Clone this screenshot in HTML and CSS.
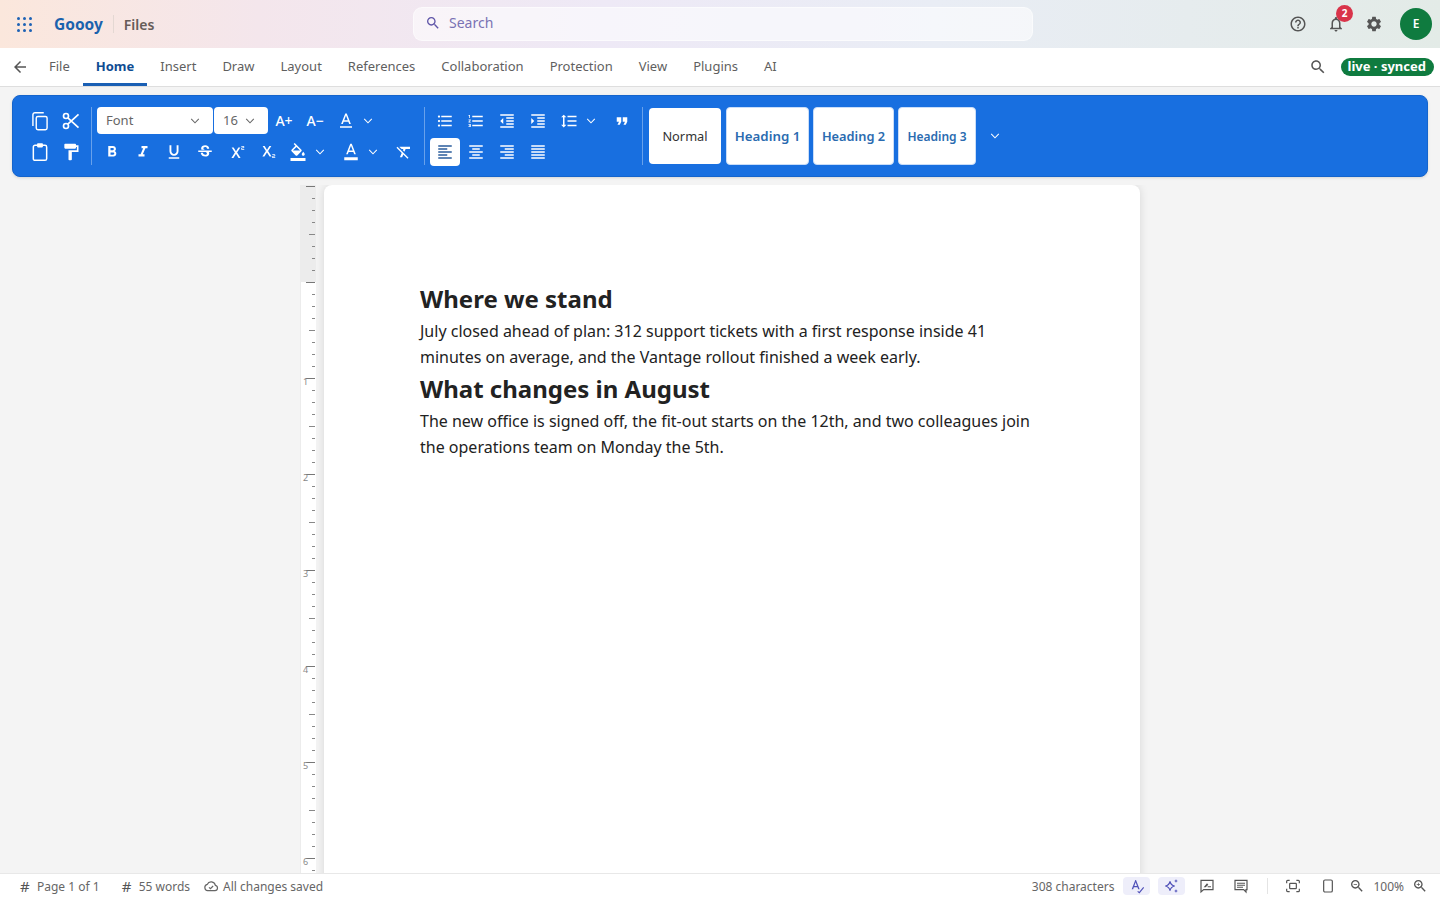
FILE: index.html
```html
<!DOCTYPE html>
<html lang="en">
<head>
  <meta charset="UTF-8" />
  <meta name="viewport" content="width=device-width, initial-scale=1.0"/>
  <title>Goooy Files</title>
  <link rel="stylesheet" href="styles.css">
</head>
<body>

  <!-- icon sprite -->
  <svg class="sprite" xmlns="http://www.w3.org/2000/svg">
    <symbol id="i-back" viewBox="0 0 24 24"><path d="M20 11H7.83l5.59-5.59L12 4l-8 8 8 8 1.41-1.41L7.83 13H20v-2z"/></symbol>
    <symbol id="i-search" viewBox="0 0 24 24"><path d="M15.5 14h-.79l-.28-.27C15.41 12.59 16 11.11 16 9.5 16 5.91 13.09 3 9.5 3S3 5.91 3 9.5 5.91 16 9.5 16c1.61 0 3.09-.59 4.23-1.57l.27.28v.79l5 4.99L20.49 19l-4.99-5zm-6 0C7.01 14 5 11.99 5 9.5S7.01 5 9.5 5 14 7.01 14 9.5 11.99 14 9.5 14z"/></symbol>
    <symbol id="i-bell" viewBox="0 0 24 24"><path d="M12 22c1.1 0 2-.9 2-2h-4c0 1.1.9 2 2 2zm6-6v-5c0-3.07-1.63-5.64-4.5-6.32V4c0-.83-.67-1.5-1.5-1.5s-1.5.67-1.5 1.5v.68C7.64 5.36 6 7.92 6 11v5l-2 2v1h16v-1l-2-2zm-2 1H8v-6c0-2.48 1.51-4.5 4-4.5s4 2.02 4 4.5v6z"/></symbol>
    <symbol id="i-gear" viewBox="0 0 24 24"><path d="M19.14 12.94c.04-.3.06-.61.06-.94 0-.32-.02-.64-.07-.94l2.03-1.58c.18-.14.23-.41.12-.61l-1.92-3.32c-.12-.22-.37-.29-.59-.22l-2.39.96c-.5-.38-1.03-.7-1.62-.94l-.36-2.54c-.04-.24-.24-.41-.48-.41h-3.84c-.24 0-.43.17-.47.41l-.36 2.54c-.59.24-1.13.57-1.62.94l-2.39-.96c-.22-.08-.47 0-.59.22L2.74 8.87c-.12.21-.08.47.12.61l2.03 1.58c-.05.3-.09.63-.09.94s.02.64.07.94l-2.03 1.58c-.18.14-.23.41-.12.61l1.92 3.32c.12.22.37.29.59.22l2.39-.96c.5.38 1.03.7 1.62.94l.36 2.54c.05.24.24.41.48.41h3.84c.24 0 .44-.17.47-.41l.36-2.54c.59-.24 1.13-.56 1.62-.94l2.39.96c.22.08.47 0 .59-.22l1.92-3.32c.12-.22.07-.47-.12-.61l-2.01-1.58zM12 15.6c-1.98 0-3.6-1.62-3.6-3.6s1.62-3.6 3.6-3.6 3.6 1.62 3.6 3.6-1.62 3.6-3.6 3.6z"/></symbol>
    <symbol id="i-help" viewBox="0 0 24 24"><path d="M11 18h2v-2h-2v2zm1-16C6.48 2 2 6.48 2 12s4.48 10 10 10 10-4.48 10-10S17.52 2 12 2zm0 18c-4.41 0-8-3.59-8-8s3.59-8 8-8 8 3.59 8 8-3.59 8-8 8zm0-14c-2.21 0-4 1.79-4 4h2c0-1.1.9-2 2-2s2 .9 2 2c0 2-3 1.75-3 5h2c0-2.25 3-2.5 3-5 0-2.21-1.79-4-4-4z"/></symbol>
    <symbol id="i-chev" viewBox="0 0 24 24"><path d="M5.5 8.5 12 15l6.5-6.5" fill="none" stroke="currentColor" stroke-width="1.8"/></symbol>
    <symbol id="i-copy" viewBox="0 0 24 24"><g fill="none" stroke="currentColor" stroke-width="1.7"><rect x="7.5" y="6.5" width="13" height="16" rx="2"/><path d="M16.5 2H6a2.5 2.5 0 0 0-2.5 2.5V18"/></g></symbol>
    <symbol id="i-cut" viewBox="0 0 24 24"><g fill="none" stroke="currentColor" stroke-width="2"><circle cx="6" cy="6" r="3"/><circle cx="6" cy="18" r="3"/><path d="M8.2 8.2 21 20M21 4 8.2 15.8"/></g></symbol>
    <symbol id="i-paste" viewBox="0 0 24 24"><g fill="none" stroke="currentColor" stroke-width="1.8"><rect x="4" y="4" width="16" height="18" rx="2"/></g><rect x="8.500" y="1.500" width="7" height="5" rx="1" fill="currentColor"/></symbol>
    <symbol id="i-paint" viewBox="0 0 24 24"><path d="M18 4V3c0-.55-.45-1-1-1H5c-.55 0-1 .45-1 1v4c0 .55.45 1 1 1h12c.55 0 1-.45 1-1V6h1v4H9v11c0 .55.45 1 1 1h2c.55 0 1-.45 1-1v-9h8V4h-3z"/></symbol>
    <symbol id="i-bold" viewBox="0 0 24 24"><path d="M15.6 10.79c.97-.67 1.65-1.77 1.65-2.79 0-2.26-1.75-4-4-4H7v14h7.04c2.09 0 3.71-1.7 3.71-3.79 0-1.52-.86-2.82-2.15-3.42zM10 6.5h3c.83 0 1.5.67 1.5 1.5s-.67 1.5-1.5 1.5h-3v-3zm3.5 9H10v-3h3.5c.83 0 1.5.67 1.5 1.5s-.67 1.5-1.5 1.5z"/></symbol>
    <symbol id="i-italic" viewBox="0 0 24 24"><path d="M10 4v3h2.21l-3.42 8H6v3h8v-3h-2.21l3.42-8H18V4z"/></symbol>
    <symbol id="i-under" viewBox="0 0 24 24"><path d="M12 17c3.31 0 6-2.69 6-6V3h-2.5v8c0 1.93-1.57 3.5-3.5 3.5S8.5 12.93 8.5 11V3H6v8c0 3.31 2.69 6 6 6zm-7 2v2h14v-2H5z"/></symbol>
    <symbol id="i-strike" viewBox="0 0 24 24"><path d="M6.85 7.08C6.85 4.37 9.45 3 12.24 3c1.64 0 3 .49 3.9 1.28.77.65 1.46 1.73 1.46 3.24h-3.01c0-.31-.05-.59-.15-.85-.29-.86-1.2-1.28-2.25-1.28-1.86 0-2.34 1.02-2.34 1.7 0 .48.25.88.74 1.21.38.25.77.48 1.41.7H7.39c-.21-.34-.54-.89-.54-1.92zM21 12v-2H3v2h9.62c1.15.45 1.96.75 1.96 1.97 0 1-.81 1.67-2.28 1.67-1.54 0-2.93-.54-2.93-2.51H6.4c0 .55.08 1.13.24 1.58.81 2.29 3.29 3.3 5.67 3.3 2.27 0 5.3-.89 5.3-4.05 0-.3-.01-1.16-.48-1.94H21V12z"/></symbol>
    <symbol id="i-sup" viewBox="0 0 24 24"><path d="M22 7h-2v1h3v1h-4V7c0-.55.45-1 1-1h2V5h-3V4h3c.55 0 1 .45 1 1v1c0 .55-.45 1-1 1zM5.88 20h2.66l3.4-5.42h.12l3.4 5.42h2.66l-4.65-7.27L17.81 6h-2.68l-3.07 4.99h-.12L8.85 6H6.19l4.32 6.73L5.88 20z"/></symbol>
    <symbol id="i-sub" viewBox="0 0 24 24"><path d="M22 18h-2v1h3v1h-4v-2c0-.55.45-1 1-1h2v-1h-3v-1h3c.55 0 1 .45 1 1v1c0 .55-.45 1-1 1zM5.88 18h2.66l3.4-5.42h.12l3.4 5.42h2.66l-4.65-7.27L17.81 4h-2.68l-3.07 4.99h-.12L8.85 4H6.19l4.32 6.73L5.88 18z"/></symbol>
    <symbol id="i-fill" viewBox="0 0 24 24"><path d="M16.56 8.94 7.62 0 6.21 1.41l2.38 2.38-5.15 5.15c-.59.59-.59 1.54 0 2.12l5.5 5.5c.29.29.68.44 1.06.44s.77-.15 1.06-.44l5.5-5.5c.59-.58.59-1.53 0-2.12zM5.21 10 10 5.21 14.79 10H5.21zM19 11.5s-2 2.17-2 3.5c0 1.1.9 2 2 2s2-.9 2-2c0-1.33-2-3.5-2-3.5z"/><rect x="2" y="20" width="20" height="4"/></symbol>
    <symbol id="i-color" viewBox="0 0 24 24"><path d="M11 1 5.5 15h2.25l1.12-3h6.25l1.12 3h2.25L13 1h-2zm-1.38 9L12 3.67 14.38 10H9.62z"/><rect x="3" y="19" width="18" height="4"/></symbol>
    <symbol id="i-color-thin" viewBox="0 0 24 24"><path d="M11 2 5.5 16h2.25l1.12-3h6.25l1.12 3h2.25L13 2h-2zm-1.38 9L12 4.67 14.38 11H9.62z"/><rect x="4" y="19" width="16" height="2"/></symbol>
    <symbol id="i-clear" viewBox="0 0 24 24"><path d="M3.27 5 2 6.27l6.97 6.97L6.5 19h3l1.57-3.66L16.73 21 18 19.73 3.55 5.27 3.27 5zM6 5v.18L8.82 8h2.4l-.72 1.68 2.1 2.1L14.21 8H20V5H6z"/></symbol>
    <symbol id="i-bullets" viewBox="0 0 24 24"><path d="M4 10.5c-.83 0-1.5.67-1.5 1.5s.67 1.5 1.5 1.5 1.5-.67 1.5-1.5-.67-1.5-1.5-1.5zm0-6c-.83 0-1.5.67-1.5 1.5S3.17 7.5 4 7.5 5.5 6.83 5.5 6 4.83 4.5 4 4.5zm0 12c-.83 0-1.5.68-1.5 1.5s.68 1.5 1.5 1.5 1.5-.68 1.5-1.5-.67-1.5-1.5-1.5zM7 19h14v-2H7v2zm0-6h14v-2H7v2zm0-8v2h14V5H7z"/></symbol>
    <symbol id="i-numbers" viewBox="0 0 24 24"><path d="M2 17h2v.5H3v1h1v.5H2v1h3v-4H2v1zm1-9h1V4H2v1h1v3zm-1 3h1.8L2 13.1v.9h3v-1H3.2L5 10.9V10H2v1zm5-6v2h14V5H7zm0 14h14v-2H7v2zm0-6h14v-2H7v2z"/></symbol>
    <symbol id="i-outdent" viewBox="0 0 24 24"><path d="M11 17h10v-2H11v2zm-8-5 4 4V8l-4 4zm0 9h18v-2H3v2zM3 3v2h18V3H3zm8 6h10V7H11v2zm0 4h10v-2H11v2z"/></symbol>
    <symbol id="i-indent" viewBox="0 0 24 24"><path d="M3 21h18v-2H3v2zM3 8v8l4-4-4-4zm8 9h10v-2H11v2zM3 3v2h18V3H3zm8 6h10V7H11v2zm0 4h10v-2H11v2z"/></symbol>
    <symbol id="i-spacing" viewBox="0 0 24 24"><path d="M6 7h2.5L5 3.5 1.5 7H4v10H1.5L5 20.5 8.5 17H6V7zm4-2v2h12V5H10zm0 14h12v-2H10v2zm0-6h12v-2H10v2z"/></symbol>
    <symbol id="i-quote" viewBox="0 0 24 24"><path d="M6 17h3l2-4V7H5v6h3zm8 0h3l2-4V7h-6v6h3z"/></symbol>
    <symbol id="i-left" viewBox="0 0 24 24"><path d="M15 15H3v2h12v-2zm0-8H3v2h12V7zM3 13h18v-2H3v2zm0 8h18v-2H3v2zM3 3v2h18V3H3z"/></symbol>
    <symbol id="i-center" viewBox="0 0 24 24"><path d="M7 15v2h10v-2H7zm-4 6h18v-2H3v2zm0-8h18v-2H3v2zm4-6v2h10V7H7zM3 3v2h18V3H3z"/></symbol>
    <symbol id="i-right" viewBox="0 0 24 24"><path d="M3 21h18v-2H3v2zm6-4h12v-2H9v2zm-6-4h18v-2H3v2zm6-4h12V7H9v2zM3 3v2h18V3H3z"/></symbol>
    <symbol id="i-justify" viewBox="0 0 24 24"><path d="M3 21h18v-2H3v2zm0-4h18v-2H3v2zm0-4h18v-2H3v2zm0-4h18V7H3v2zm0-6v2h18V3H3z"/></symbol>
    <symbol id="i-cloud" viewBox="0 0 24 24"><g fill="none" stroke="currentColor" stroke-width="1.8"><path d="M7 19h11a4 4 0 0 0 .6-7.9A6.5 6.5 0 0 0 6.3 9.6 4.8 4.8 0 0 0 7 19z"/><path d="m9 14 2.2 2 4-4"/></g></symbol>
    <symbol id="i-spell" viewBox="0 0 24 24"><path d="M9.5 3 4 17h2.2l1.1-3h5.4l1.1 3H16L10.500 3h-1zM8 12l2-5.500L12 12H8z"/><path d="m13 20 2.500 2L22 14" fill="none" stroke="currentColor" stroke-width="1.700"/></symbol>
    <symbol id="i-spark" viewBox="0 0 24 24"><path d="M9 5c.9 4.600 2.400 6.100 7 7-4.600.9-6.100 2.400-7 7-.9-4.600-2.400-6.100-7-7 4.600-.9 6.100-2.400 7-7z" fill="none" stroke="currentColor" stroke-width="1.800"/><path d="M18 1.500c.4 2 1.100 2.700 3 3-1.900.3-2.600 1-3 3-.4-2-1.100-2.700-3-3 1.900-.3 2.600-1 3-3zM18 16.500c.4 2 1.100 2.700 3 3-1.900.3-2.600 1-3 3-.4-2-1.100-2.700-3-3 1.900-.3 2.600-1 3-3z"/></symbol>
    <symbol id="i-sign" viewBox="0 0 24 24"><g fill="none" stroke="currentColor" stroke-width="1.800"><path d="M3 3.500h18v14H7l-4 3.500z"/></g><path d="m7 14 5-6 2 2-4 4zM13 14h5v-1.500h-5z"/></symbol>
    <symbol id="i-comment" viewBox="0 0 24 24"><g fill="none" stroke="currentColor" stroke-width="1.800"><path d="M3 3.500h18v14h-1.500V21L16 17.500H3z"/></g><path d="M6 7h12v1.600H6zM6 10h12v1.600H6zM6 13h9v1.600H6z"/></symbol>
    <symbol id="i-fit" viewBox="0 0 24 24"><g fill="none" stroke="currentColor" stroke-width="1.800"><rect x="7" y="8" width="10" height="8" rx="1"/><path d="M2.500 8V5a1.500 1.500 0 0 1 1.500-1.500h3M17 3.500h3A1.500 1.500 0 0 1 21.500 5v3M21.500 16v3a1.500 1.500 0 0 1-1.500 1.500h-3M7 20.500H4A1.500 1.500 0 0 1 2.500 19v-3"/></g></symbol>
    <symbol id="i-sheet" viewBox="0 0 24 24"><rect x="5.500" y="3" width="13" height="18" rx="2" fill="none" stroke="currentColor" stroke-width="1.800"/></symbol>
    <symbol id="i-zoomout" viewBox="0 0 24 24"><path d="M15.500 14h-.79l-.28-.27C15.410 12.590 16 11.110 16 9.500 16 5.910 13.090 3 9.500 3S3 5.910 3 9.500 5.910 16 9.500 16c1.610 0 3.090-.59 4.230-1.570l.27.28v.79l5 4.990L20.490 19l-4.990-5zm-6 0C7.010 14 5 11.990 5 9.500S7.010 5 9.500 5 14 7.010 14 9.500 11.990 14 9.500 14zM7 9h5v1H7z"/></symbol>
    <symbol id="i-zoomin" viewBox="0 0 24 24"><path d="M15.500 14h-.79l-.28-.27C15.410 12.590 16 11.110 16 9.500 16 5.910 13.090 3 9.500 3S3 5.910 3 9.500 5.910 16 9.500 16c1.610 0 3.090-.59 4.230-1.570l.27.28v.79l5 4.990L20.490 19l-4.990-5zm-6 0C7.010 14 5 11.990 5 9.500S7.010 5 9.500 5 14 7.010 14 9.500 11.990 14 9.500 14zM12 10h-2v2H9v-2H7V9h2V7h1v2h2v1z"/></symbol>
  </svg>

  <header class="topbar">
    <div class="brand">
      <span class="apps"><i></i><i></i><i></i><i></i><i></i><i></i><i></i><i></i><i></i></span>
      <span class="logo">Goooy</span>
      <span class="app-name">Files</span>
    </div>
    <div class="searchbox">
      <svg class="icon-16"><use href="#i-search"/></svg>
      <span>Search</span>
    </div>
    <div class="top-actions">
      <svg class="icon-18 help"><use href="#i-help"/></svg>
      <span class="bell">
        <svg class="icon-18"><use href="#i-bell"/></svg>
        <b class="badge">2</b>
      </span>
      <svg class="icon-18 gear"><use href="#i-gear"/></svg>
      <span class="avatar">E</span>
    </div>
  </header>

  <nav class="tabs">
    <svg class="icon-18 back"><use href="#i-back"/></svg>
    <a>File</a>
    <a class="active">Home</a>
    <a>Insert</a>
    <a>Draw</a>
    <a>Layout</a>
    <a>References</a>
    <a>Collaboration</a>
    <a>Protection</a>
    <a>View</a>
    <a>Plugins</a>
    <a>AI</a>
    <svg class="icon-18 tab-search"><use href="#i-search"/></svg>
    <span class="live">live · synced</span>
  </nav>

  <section class="ribbon">
    <div class="group clip-group">
      <div class="tool-row">
        <button><svg><use href="#i-copy"/></svg></button>
        <button><svg><use href="#i-cut"/></svg></button>
      </div>
      <div class="tool-row">
        <button><svg><use href="#i-paste"/></svg></button>
        <button><svg><use href="#i-paint"/></svg></button>
      </div>
    </div>
    <span class="sep"></span>
    <div class="group">
      <div class="tool-row">
        <div class="select font-select"><span>Font</span> <svg><use href="#i-chev"/></svg></div>
        <div class="select size-select"><span>16</span> <svg><use href="#i-chev"/></svg></div>
        <button class="txt">A+</button>
        <button class="txt">A−</button>
        <button><svg><use href="#i-color-thin"/></svg></button>
        <button class="chev"><svg><use href="#i-chev"/></svg></button>
      </div>
      <div class="tool-row">
        <button><svg><use href="#i-bold"/></svg></button>
        <button><svg><use href="#i-italic"/></svg></button>
        <button><svg><use href="#i-under"/></svg></button>
        <button><svg><use href="#i-strike"/></svg></button>
        <button><svg><use href="#i-sup"/></svg></button>
        <button><svg><use href="#i-sub"/></svg></button>
        <button><svg><use href="#i-fill"/></svg></button>
        <button class="chev"><svg><use href="#i-chev"/></svg></button>
        <button class="push-8"><svg><use href="#i-color"/></svg></button>
        <button class="chev"><svg><use href="#i-chev"/></svg></button>
        <button class="push-8"><svg><use href="#i-clear"/></svg></button>
      </div>
    </div>
    <span class="sep"></span>
    <div class="group">
      <div class="tool-row">
        <button><svg><use href="#i-bullets"/></svg></button>
        <button><svg><use href="#i-numbers"/></svg></button>
        <button><svg><use href="#i-outdent"/></svg></button>
        <button><svg><use href="#i-indent"/></svg></button>
        <button><svg><use href="#i-spacing"/></svg></button>
        <button class="chev"><svg><use href="#i-chev"/></svg></button>
        <button class="push-8"><svg><use href="#i-quote"/></svg></button>
      </div>
      <div class="tool-row">
        <button class="on"><svg><use href="#i-left"/></svg></button>
        <button><svg><use href="#i-center"/></svg></button>
        <button><svg><use href="#i-right"/></svg></button>
        <button><svg><use href="#i-justify"/></svg></button>
      </div>
    </div>
    <span class="sep"></span>
    <div class="styles">
      <div class="style-card normal">Normal</div>
      <div class="style-card h1">Heading 1</div>
      <div class="style-card h2">Heading 2</div>
      <div class="style-card h3">Heading 3</div>
      <button class="chev more"><svg><use href="#i-chev"/></svg></button>
    </div>
  </section>

  <main class="canvas">
    <div class="ruler">
      <span class="blank"></span>
      <span class="inch">1</span>
      <span class="inch">2</span>
      <span class="inch">3</span>
      <span class="inch">4</span>
      <span class="inch">5</span>
      <span class="inch">6</span>
    </div>
    <article class="page">
      <h2>Where we stand</h2>
      <p>July closed ahead of plan: 312 support tickets with a first response inside 41 minutes on average, and the Vantage rollout finished a week early.</p>
      <h2>What changes in August</h2>
      <p>The new office is signed off, the fit-out starts on the 12th, and two colleagues join the operations team on Monday the 5th.</p>
    </article>
  </main>

  <footer class="statusbar">
    <span class="stat first"><b class="hash">#</b> Page 1 of 1</span>
    <span class="stat second"><b class="hash">#</b> 55 words</span>
    <span class="stat saved"><svg class="icon-16"><use href="#i-cloud"/></svg> All changes saved</span>
    <span class="chars">308 characters</span>
    <span class="pill-btn"><svg class="icon-16"><use href="#i-spell"/></svg></span>
    <span class="pill-btn"><svg class="icon-16"><use href="#i-spark"/></svg></span>
    <svg class="icon-16 st-sign"><use href="#i-sign"/></svg>
    <svg class="icon-16 st-comment"><use href="#i-comment"/></svg>
    <span class="st-sep"></span>
    <svg class="icon-16 st-fit"><use href="#i-fit"/></svg>
    <svg class="icon-16 st-sheet"><use href="#i-sheet"/></svg>
    <svg class="icon-16 st-out"><use href="#i-zoomout"/></svg>
    <span class="zoom-val">100%</span>
    <svg class="icon-16 st-in"><use href="#i-zoomin"/></svg>
  </footer>

</body>
</html>
```

FILE: styles.css
```css
* {
  box-sizing: border-box;
}

html, body {
  height: 100%;
}

body {
  margin: 0;
  display: flex;
  flex-direction: column;
  overflow: hidden;
  font-family: 'Noto Sans', sans-serif;
  background: #f4f4f4;
  color: #222;
}

svg {
  fill: currentColor;
  flex: none;
}

.sprite {
  display: none;
}

.icon-16 {
  width: 16px;
  height: 16px;
}

.icon-18 {
  width: 18px;
  height: 18px;
}

/* top bar */
.topbar {
  height: 48px;
  flex: none;
  display: flex;
  align-items: center;
  position: relative;
  background: linear-gradient(90deg, #fbe7dc 0%, #f4e6ec 18%, #eee9f6 42%, #e9edf5 65%, #e3ebe7 100%);
}

.brand {
  display: flex;
  align-items: center;
  width: 413px;
  padding-left: 17px;
}

.apps {
  width: 16px;
  display: grid;
  grid-template-columns: repeat(3, 3px);
  gap: 3px;
}

.apps i {
  width: 3px;
  height: 3px;
  border-radius: 50%;
  background: #1d62b5;
}

.logo {
  margin-left: 21px;
  padding-right: 10px;
  border-right: 1px solid #e4d8d3;
  font-size: 15.5px;
  font-weight: 700;
  color: #1a62ad;
  line-height: 18px;
}

.app-name {
  margin-left: 10px;
  font-size: 14px;
  font-weight: 600;
  color: #665c58;
}

.searchbox {
  width: 620px;
  height: 34px;
  padding: 0 0 2px 11px;
  display: flex;
  align-items: center;
  gap: 8px;
  border-radius: 9px;
  background: rgba(255, 255, 255, 0.55);
  border: 1px solid rgba(255, 255, 255, 0.5);
  color: #5f55a8;
  font-size: 14px;
}

.searchbox span {
  margin-bottom: 2px;
  color: #7a72b4;
}

.top-actions {
  margin-left: auto;
  padding-right: 8px;
  display: flex;
  align-items: center;
  color: #555;
}

.bell {
  margin-left: 20px;
  display: flex;
  position: relative;
}

.badge {
  position: absolute;
  top: -10px;
  left: 9px;
  width: 17px;
  height: 17px;
  border-radius: 50%;
  background: #d9344a;
  color: #fff;
  font-size: 10px;
  line-height: 17px;
  text-align: center;
}

.gear {
  margin-left: 20px;
}

.avatar {
  width: 32px;
  height: 32px;
  margin-left: 17px;
  border-radius: 50%;
  background: #0f7b3f;
  color: #fff;
  font-size: 12px;
  font-weight: 600;
  line-height: 32px;
  text-align: center;
}

/* tab row */
.tabs {
  height: 39px;
  flex: none;
  display: flex;
  align-items: stretch;
  background: #fff;
  border-bottom: 1px solid #dedede;
  font-size: 13px;
  color: #5f5f5f;
}

.tabs svg.back {
  width: 18px;
  margin: 10px 7px 0 11px;
  color: #555;
}

.tabs a {
  padding: 0 13px;
  line-height: 37px;
  border-bottom: 3px solid transparent;
  height: 38px;
}

.tabs a.active {
  color: #0f4c92;
  font-weight: 700;
  border-bottom-color: #1a5fb4;
}

.tab-search {
  margin: 10px 14px 0 auto;
  color: #555;
}

.live {
  align-self: flex-start;
  margin: 10px 6px 0 0;
  height: 18px;
  padding: 0 8px 0 7px;
  border-radius: 9px;
  background: #0f7b3f;
  color: #fff;
  font-size: 13px;
  font-weight: 700;
  line-height: 17px;
}

/* ribbon */
.ribbon {
  flex: none;
  height: 82px;
  margin: 8px 12px 0;
  padding: 0 12px;
  display: flex;
  align-items: center;
  background: #186fe0;
  border: 1px solid #1464cc;
  border-radius: 8px;
  box-shadow: 0 1px 3px rgba(0, 0, 0, 0.12);
  color: #fff;
}

.group {
  display: flex;
  flex-direction: column;
  gap: 3px;
}

.tool-row {
  height: 28px;
  display: flex;
  align-items: center;
  gap: 1px;
}

.ribbon button {
  width: 30px;
  height: 28px;
  padding: 0;
  border: 0;
  border-radius: 4px;
  background: none;
  color: #fff;
  display: flex;
  align-items: center;
  justify-content: center;
  font-family: inherit;
}

.ribbon button svg {
  width: 18px;
  height: 18px;
}

.ribbon .clip-group button svg {
  width: 20px;
  height: 20px;
}

.ribbon button.txt {
  font-size: 14px;
  font-weight: 500;
}

.ribbon button.chev {
  width: 14px;
  margin-left: -1px;
}

.ribbon button.chev svg {
  width: 14px;
  height: 14px;
}

.ribbon button.more {
  width: 14px;
  margin-left: 8px;
}

.ribbon button.on {
  background: #fff;
  color: #2a5c9c;
}

.push-8 {
  margin-left: 8px;
}

.sep {
  width: 1px;
  height: 58px;
  margin: 0 5px;
  background: rgba(255, 255, 255, 0.35);
}

.select {
  height: 27px;
  padding: 0 11px 0 9px;
  display: flex;
  align-items: center;
  justify-content: space-between;
  border-radius: 4px;
  background: #fff;
  color: #666;
  font-size: 13px;
}

.select span {
  margin-bottom: 2px;
}

.select svg {
  width: 14px;
  height: 14px;
  color: #666;
}

.font-select {
  width: 116px;
}

.size-select {
  width: 54px;
}

.styles {
  display: flex;
  align-items: center;
  margin-left: 1px;
  gap: 4px;
}

.style-card {
  height: 58px;
  display: flex;
  align-items: center;
  justify-content: center;
  border-radius: 4px;
  background: #fff;
  border: 1px solid #c9ddf8;
  color: #2a6bb0;
  font-weight: 600;
}

.style-card.normal {
  width: 72px;
  height: 56px;
  margin-right: 1px;
  border: 0;
  color: #333;
  font-size: 12.8px;
  font-weight: 400;
}

.style-card.h1 {
  width: 83px;
  font-size: 13.3px;
}

.style-card.h2 {
  width: 81px;
  font-size: 12.8px;
}

.style-card.h3 {
  width: 78px;
  font-size: 12px;
}

/* document area */
.canvas {
  flex: 1;
  min-height: 0;
  margin-top: 8px;
  display: flex;
  justify-content: center;
  gap: 8px;
  overflow: hidden;
}

.ruler {
  width: 16px;
  flex: none;
  border-left: 1px solid #ececec;
  background:
    linear-gradient(#777 0 1px, transparent 1px) right 1px top 1px / 9px 96px repeat-y,
    linear-gradient(#888 0 1px, transparent 1px) right 1px top 1px / 6px 48px repeat-y,
    linear-gradient(#888 0 1px, transparent 1px) right 1px top 1px / 3px 12px repeat-y,
    linear-gradient(#ececec, #ececec) left top / 100% 97px no-repeat,
    #fff;
  display: flex;
  flex-direction: column;
}

.ruler .blank {
  height: 192px;
  flex: none;
}

.ruler .inch {
  height: 96px;
  flex: none;
  padding-left: 2px;
  font-size: 9px;
  line-height: 10px;
  color: #888;
}

.page {
  width: 816px;
  height: 1056px;
  flex: none;
  padding: 96px;
  background: #fff;
  border-radius: 8px 8px 0 0;
  box-shadow: 0 0 10px rgba(0, 0, 0, 0.12);
}

.page h2 {
  margin: 0 0 1px;
  font-size: 24px;
  font-weight: 700;
  line-height: 36px;
  color: #222;
}

.page p {
  margin: 0;
  font-size: 16px;
  line-height: 26px;
  color: #222;
  padding-bottom: 1px;
}

/* status bar */
.statusbar {
  height: 27px;
  flex: none;
  padding-bottom: 2px;
  display: flex;
  align-items: center;
  position: relative;
  background: #fff;
  border-top: 1px solid #e8e8e8;
  font-size: 12px;
  color: #666;
}

.stat {
  display: flex;
  align-items: center;
}

.hash {
  width: 12px;
  margin-right: 5px;
  font-size: 15px;
  font-weight: 400;
  color: #555;
}

.first {
  margin-left: 20px;
}

.second {
  margin-left: 22px;
}

.saved {
  margin-left: 13px;
  gap: 4px;
}

.chars {
  margin-left: auto;
  margin-right: 1px;
}

.pill-btn {
  width: 27px;
  height: 18px;
  margin-left: 8px;
  display: flex;
  align-items: center;
  justify-content: center;
  border-radius: 4px;
  background: #eeeefa;
  color: #4f50b8;
}

.st-sign {
  margin-left: 14px;
  color: #555;
}

.st-comment {
  margin-left: 18px;
  color: #555;
}

.st-sep {
  width: 1px;
  height: 16px;
  margin: 0 17px 0 18px;
  background: #e4e4e4;
}

.st-fit,
.st-sheet,
.st-out,
.st-in {
  color: #555;
}

.st-sheet {
  margin-left: 19px;
}

.st-out {
  margin-left: 13px;
}

.zoom-val {
  margin-left: 8px;
}

.st-in {
  margin: 0 12px 0 8px;
}
```
